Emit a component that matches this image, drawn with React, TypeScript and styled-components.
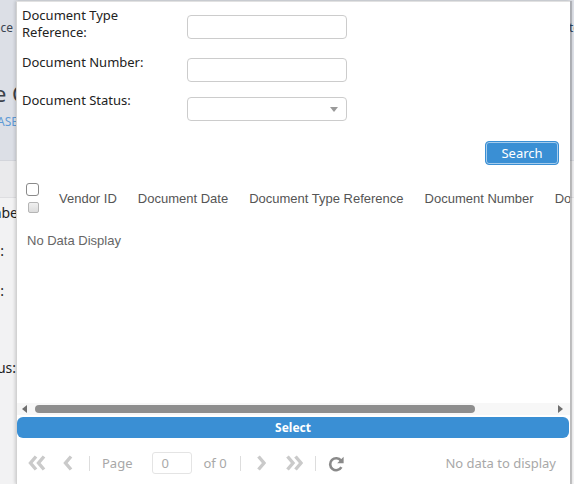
import React from "react";
import styled, { createGlobalStyle } from "styled-components";

const GlobalStyle = createGlobalStyle`
  html, body { margin: 0; padding: 0; }
  body {
    width: 574px;
    height: 484px;
    overflow: hidden;
    background: #f2f2f3;
    font-family: "Noto Sans", "Liberation Sans", sans-serif;
  }
  * { box-sizing: border-box; }
`;

/* ---------- page behind the modal ---------- */

const Behind = styled.div`
  position: relative;
  width: 574px;
  height: 484px;
  overflow: hidden;
  background: #f2f2f3;
  display: flex;
  flex-direction: column;
`;

const HeaderBand = styled.div`
  height: 160px;
  flex-shrink: 0;
  background: #dcdfe6;
  display: flex;
  flex-direction: column;
`;

const SubBand = styled.div`
  height: 38px;
  flex-shrink: 0;
  background: #eaeaec;
  border-top: 1px solid #d3d5db;
  border-bottom: 1px solid #dedee1;
`;

const PeekRow = styled.div<{ $h: number; $mt?: number }>`
  height: ${(p) => p.$h}px;
  margin-top: ${(p) => p.$mt ?? 0}px;
  flex-shrink: 0;
  display: flex;
  align-items: center;
  justify-content: space-between;
`;

const LeftPeek = styled.div<{ $w?: number; $pr?: number; $size: number; $color: string }>`
  width: ${(p) => p.$w ?? 16}px;
  padding-right: ${(p) => p.$pr ?? 0}px;
  overflow: hidden;
  display: flex;
  justify-content: flex-end;
  white-space: nowrap;
  font-family: "Noto Sans", "Liberation Sans", sans-serif;
  font-size: ${(p) => p.$size}px;
  color: ${(p) => p.$color};
`;

const RightPeek = styled.div`
  width: 4px;
  overflow: hidden;
  white-space: nowrap;
  font-size: 12px;
  color: #33506e;
  text-indent: -1px;
`;

/* ---------- modal ---------- */

const Modal = styled.div`
  position: absolute;
  top: 1px;
  left: 16px;
  width: 554px;
  height: 483px;
  background: #ffffff;
  border-top: 1px solid #e1e1e1;
  border-left: 1px solid #d2d2d2;
  box-shadow: -1px 0 3px rgba(0, 0, 0, 0.16), 2px 0 1px rgba(0, 0, 0, 0.2);
  display: flex;
  flex-direction: column;
  overflow: hidden;
`;

const Form = styled.div`
  padding: 5px 0 0 5px;
  display: flex;
  flex-direction: column;
`;

const FieldRow = styled.div<{ $h: number; $inputTop: number }>`
  height: ${(p) => p.$h}px;
  display: grid;
  grid-template-columns: 165px 160px;
  align-items: start;
  & > :nth-child(2) {
    margin-top: ${(p) => p.$inputTop}px;
  }
`;

const Label = styled.label`
  font-size: 13px;
  line-height: 17px;
  color: #222;
`;

const TextInput = styled.div`
  width: 160px;
  height: 24px;
  border: 1px solid #cccccc;
  border-radius: 4px;
  background: #fff;
`;

const SelectBox = styled(TextInput)`
  display: flex;
  align-items: center;
  justify-content: flex-end;
  padding-right: 8px;
`;

const Caret = styled.span`
  width: 0;
  height: 0;
  border-left: 4px solid transparent;
  border-right: 4px solid transparent;
  border-top: 5px solid #9a9a9a;
`;

const SearchBar = styled.div`
  margin-top: 20px;
  display: flex;
  justify-content: flex-end;
  padding-right: 11px;
`;

const SearchButton = styled.button`
  width: 74px;
  height: 24px;
  border: 1px solid #3a8fd4;
  border-radius: 4px;
  background: #3a8fd4;
  box-shadow: inset 0 0 0 1px rgba(255, 255, 255, 0.55);
  color: #fff;
  font-family: "Noto Sans", "Liberation Sans", sans-serif;
  font-size: 13px;
  padding: 0;
  cursor: pointer;
`;

const TableViewport = styled.div`
  height: 239px;
  overflow: hidden;
  display: flex;
  flex-direction: column;
`;

const HeaderRow = styled.div`
  margin-top: 13px;
  height: 40px;
  display: flex;
  align-items: center;
  white-space: nowrap;
`;

const CheckCell = styled.div`
  width: 32px;
  flex-shrink: 0;
  padding-left: 9px;
  display: flex;
  flex-direction: column;
  gap: 6px;
`;

const CheckBox = styled.span<{ $small?: boolean }>`
  display: block;
  width: ${(p) => (p.$small ? 11 : 13)}px;
  height: ${(p) => (p.$small ? 11 : 13)}px;
  margin-left: ${(p) => (p.$small ? 2 : 0)}px;
  border: 1px solid ${(p) => (p.$small ? "#b5b5b5" : "#8a8a8a")};
  border-radius: ${(p) => (p.$small ? 2 : 3)}px;
  background: ${(p) =>
    p.$small ? "linear-gradient(#f0f0f0, #dcdcdc)" : "#ffffff"};
`;

const HeaderCell = styled.div`
  flex-shrink: 0;
  padding: 0 11px 0 10px;
  font-family: "Liberation Sans", Arial, sans-serif;
  font-size: 13px;
  color: #555;
`;

const EmptyRow = styled.div`
  height: 44px;
  display: flex;
  align-items: center;
  padding-left: 10px;
  font-family: "Liberation Sans", Arial, sans-serif;
  font-size: 13px;
  color: #666;
`;

const ScrollBar = styled.div`
  height: 12px;
  background: #f7f7f7;
  display: flex;
  align-items: center;
`;

const ArrowLeft = styled.span`
  margin-left: 5px;
  width: 0;
  height: 0;
  border-top: 4px solid transparent;
  border-bottom: 4px solid transparent;
  border-right: 5px solid #6f6f6f;
`;

const ArrowRight = styled.span`
  margin-right: 7px;
  width: 0;
  height: 0;
  border-top: 4px solid transparent;
  border-bottom: 4px solid transparent;
  border-left: 5px solid #6f6f6f;
`;

const Thumb = styled.span`
  margin-left: 8px;
  width: 440px;
  height: 8px;
  border-radius: 4px;
  background: #8e8e8e;
`;

const Spacer = styled.span`
  flex: 1;
`;

const SelectButton = styled.button`
  margin: 2px 1px 0 0;
  height: 21px;
  border: none;
  border-radius: 6px;
  background: #3a8fd4;
  color: #fff;
  font-family: "Noto Sans", "Liberation Sans", sans-serif;
  font-size: 12px;
  font-weight: 700;
  padding: 0;
  cursor: pointer;
`;

const Pager = styled.div`
  height: 46px;
  padding: 4px 14px 0 11px;
  display: flex;
  align-items: center;
`;

const PagerItem = styled.span<{ $ml?: number }>`
  margin-left: ${(p) => p.$ml ?? 0}px;
  display: flex;
  align-items: center;
  font-size: 13px;
  color: #a8a8a8;
`;

const Divider = styled.span<{ $ml: number }>`
  margin-left: ${(p) => p.$ml}px;
  width: 1px;
  height: 15px;
  background: #dddddd;
`;

const PageInput = styled.div`
  margin-left: 19px;
  width: 40px;
  height: 22px;
  border: 1px solid #e4e4e4;
  border-radius: 3px;
  padding-left: 9px;
  display: flex;
  align-items: center;
  font-size: 13px;
  color: #aaa;
`;

const PagerInfo = styled.span`
  margin-left: auto;
  font-size: 13px;
  color: #a8a8a8;
`;

const Chevrons = ({ dir, double }: { dir: "l" | "r"; double?: boolean }) => {
  const w = double ? 18 : 10;
  const single = (x: number) =>
    dir === "l"
      ? `${x + 7},1.5 ${x + 1.5},8 ${x + 7},14.5`
      : `${x + 1.5},1.5 ${x + 7},8 ${x + 1.5},14.5`;
  return (
    <svg width={w} height={16} viewBox={`0 0 ${w} 16`}>
      <polyline points={single(1)} fill="none" stroke="#cacaca" strokeWidth={3.4} />
      {double && (
        <polyline points={single(9)} fill="none" stroke="#cacaca" strokeWidth={3.4} />
      )}
    </svg>
  );
};

const RefreshIcon = () => (
  <svg width={17} height={17} viewBox="0 0 17 17">
    <path d="M13 5.6 A6 6 0 1 0 13.4 12.2" fill="none" stroke="#8a8a8a" strokeWidth={2.6} />
    <polygon points="15.6,1.8 15.6,8.2 9.2,8.2" fill="#8a8a8a" />
  </svg>
);

const columns = [
  "Vendor ID",
  "Document Date",
  "Document Type Reference",
  "Document Number",
  "Document Status",
];

export default function App() {
  return (
    <>
      <GlobalStyle />
      <Behind>
        <HeaderBand>
          <PeekRow $h={54}>
            <LeftPeek $pr={3} $size={12} $color="#3b4450">Maintenance</LeftPeek>
            <RightPeek>tools</RightPeek>
          </PeekRow>
          <PeekRow $h={30} $mt={24}>
            <LeftPeek $w={26} $size={22} $color="#3c424a">Invoice C</LeftPeek>
          </PeekRow>
          <PeekRow $h={18} $mt={4}>
            <LeftPeek $w={18} $size={12} $color="#5f9bd6">RELEASE</LeftPeek>
          </PeekRow>
        </HeaderBand>
        <SubBand />
        <PeekRow $h={28}>
          <LeftPeek $w={18} $size={14} $color="#222">Vendor Numbe</LeftPeek>
        </PeekRow>
        <PeekRow $h={48}>
          <LeftPeek $pr={12} $size={14} $color="#222">:</LeftPeek>
        </PeekRow>
        <PeekRow $h={32}>
          <LeftPeek $pr={12} $size={14} $color="#222">:</LeftPeek>
        </PeekRow>
        <PeekRow $h={38} />
        <PeekRow $h={46}>
          <LeftPeek $size={14} $color="#222">Status:</LeftPeek>
        </PeekRow>

        <Modal>
          <Form>
            <FieldRow $h={47} $inputTop={8}>
              <Label>
                Document Type
                <br />
                Reference:
              </Label>
              <TextInput />
            </FieldRow>
            <FieldRow $h={38} $inputTop={4}>
              <Label>Document Number:</Label>
              <TextInput />
            </FieldRow>
            <FieldRow $h={29} $inputTop={5}>
              <Label>Document Status:</Label>
              <SelectBox>
                <Caret />
              </SelectBox>
            </FieldRow>
          </Form>

          <SearchBar>
            <SearchButton>Search</SearchButton>
          </SearchBar>

          <TableViewport>
            <HeaderRow>
              <CheckCell>
                <CheckBox />
                <CheckBox $small />
              </CheckCell>
              {columns.map((c) => (
                <HeaderCell key={c}>{c}</HeaderCell>
              ))}
            </HeaderRow>
            <EmptyRow>No Data Display</EmptyRow>
          </TableViewport>

          <ScrollBar>
            <ArrowLeft />
            <Thumb />
            <Spacer />
            <ArrowRight />
          </ScrollBar>

          <SelectButton>Select</SelectButton>

          <Pager>
            <PagerItem>
              <Chevrons dir="l" double />
            </PagerItem>
            <PagerItem $ml={17}>
              <Chevrons dir="l" />
            </PagerItem>
            <Divider $ml={16} />
            <PagerItem $ml={12}>Page</PagerItem>
            <PageInput>0</PageInput>
            <PagerItem $ml={12}>of 0</PagerItem>
            <Divider $ml={13} />
            <PagerItem $ml={15}>
              <Chevrons dir="r" />
            </PagerItem>
            <PagerItem $ml={19}>
              <Chevrons dir="r" double />
            </PagerItem>
            <Divider $ml={12} />
            <PagerItem $ml={12}>
              <RefreshIcon />
            </PagerItem>
            <PagerInfo>No data to display</PagerInfo>
          </Pager>
        </Modal>
      </Behind>
    </>
  );
}
